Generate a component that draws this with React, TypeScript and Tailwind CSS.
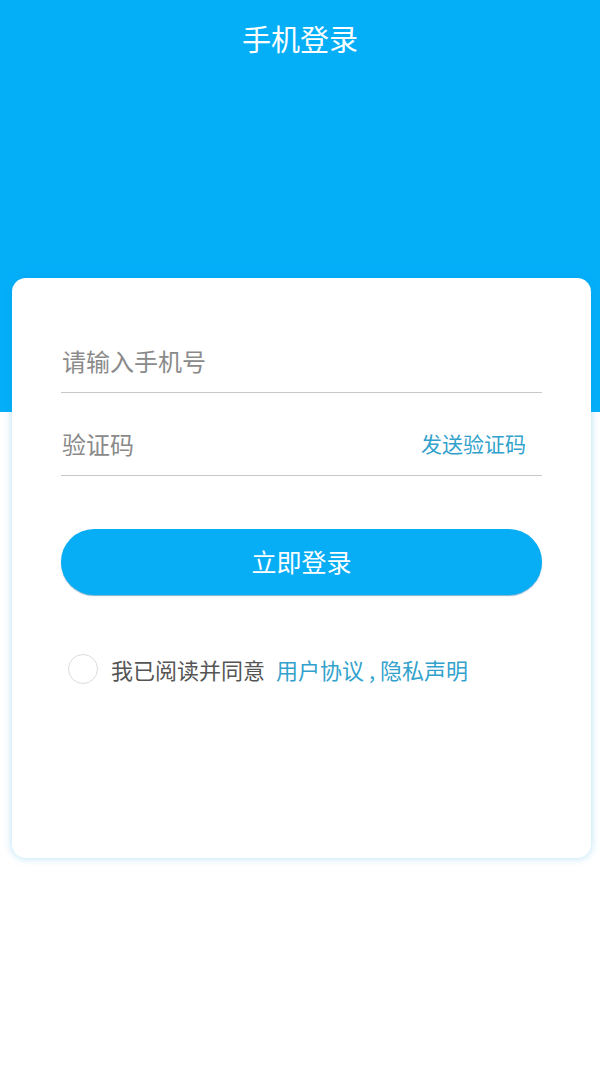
import React from "react";

export default function App() {
  const font = { fontFamily: '"Noto Sans CJK SC", "Noto Sans", sans-serif' };
  return (
    <div className="min-h-[1067px] bg-white" style={font}>
      <div className="h-[412px] bg-[#05aff8] pt-[20px]">
        <h1 className="text-center text-[29px] leading-[36px] text-white">手机登录</h1>
      </div>
      <div className="relative -mt-[134px] ml-[12px] h-[580px] w-[579px] rounded-[14px] bg-white px-[49px] pt-[51px] shadow-[0_0_8px_rgba(0,150,220,0.3)]">
        <div className="flex h-[64px] items-center border-b border-[#c8c8c8]">
          <span className="pl-[1px] text-[24px] text-[#8a8a8a]">请输入手机号</span>
        </div>
        <div className="mt-[19px] flex h-[64px] items-center justify-between border-b border-[#c8c8c8]">
          <span className="pl-[1px] text-[24px] text-[#8a8a8a]">验证码</span>
          <span className="pr-[16px] text-[21px] text-[#32a2cc]">发送验证码</span>
        </div>
        <button className="mt-[53px] flex h-[66px] w-full items-center justify-center rounded-full bg-[#07aef6] text-[25px] text-white shadow-[0_1px_1px_rgba(0,100,160,0.5)]">
          立即登录
        </button>
        <div className="mt-[59px] flex h-[30px] items-center pl-[7px]">
          <span className="h-[30px] w-[30px] rounded-full border-[1.5px] border-[#dcdcdc]" />
          <span className="ml-[13px] text-[22px] text-[#555]">我已阅读并同意</span>
          <span className="ml-[11px] text-[22px] text-[#32a2cc]">用户协议 , 隐私声明</span>
        </div>
      </div>
    </div>
  );
}
